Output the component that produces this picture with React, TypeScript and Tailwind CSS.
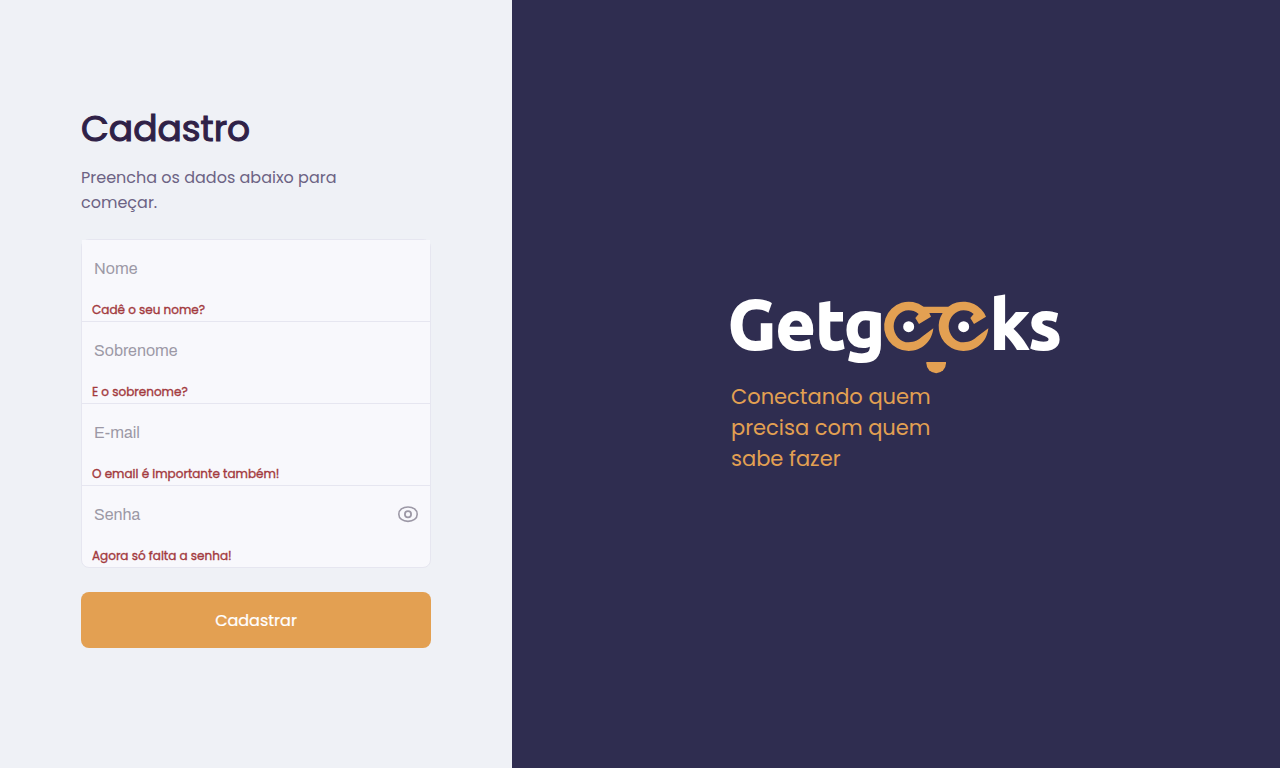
import { useState } from "react";

const fields = [
  { id: "nome", label: "Nome", type: "text", error: "Cadê o seu nome?" },
  { id: "sobrenome", label: "Sobrenome", type: "text", error: "E o sobrenome?" },
  { id: "email", label: "E-mail", type: "email", error: "O email é importante também!" },
  { id: "senha", label: "Senha", type: "password", error: "Agora só falta a senha!" },
];

function EyeIcon() {
  return (
    <svg viewBox="0 0 24 24" className="size-6" fill="none" stroke="currentColor" aria-hidden="true">
      <path
        d="M2.8 11.2C2.8 6.8 6.9 4 12 4S21.2 6.8 21.2 11.2 17.1 18.4 12 18.4 2.8 15.6 2.8 11.2Z"
        strokeWidth="1.6"
      />
      <circle cx="12" cy="11.2" r="3.1" strokeWidth="1.8" />
    </svg>
  );
}

function Logo() {
  return (
    <svg viewBox="0 0 330 80" className="block h-20 w-full overflow-visible" role="img" aria-label="Getgeeks">
      <g fill="#fff" stroke="#fff" strokeWidth="2" fontFamily="Ubuntu, Roboto, sans-serif" fontWeight="700" fontSize="69">
        <text x="-3" y="55">Getg</text>
        <text x="259" y="55">ks</text>
      </g>
      <g transform="translate(139 -9) scale(.33333)" fill="#e3a052">
        <path d="M190 130C186 170 155 198 116 198A74 74 0 1 1 161 65H236V84H178L183 95L147 117L136 99L146 87C137 79 126 76 116 76A45 48 0 0 0 116 172C134 172 148 163 158 154Z" />
        <path d="M355 130C351 170 320 198 281 198A74 74 0 1 1 348 95L312 117L301 99L311 87C302 79 291 76 281 76A45 48 0 0 0 281 172C299 172 313 163 323 154Z" />
        <path d="M169 231H228V235A29.5 29.5 0 0 1 169 235Z" />
        <circle cx="116" cy="125" r="16.5" fill="#fff" />
        <circle cx="281" cy="125" r="16.5" fill="#fff" />
      </g>
    </svg>
  );
}

export default function App() {
  const [visible, setVisible] = useState(false);
  return (
    <div className="flex min-h-screen bg-[#eff1f6] font-[Poppins,Inter,sans-serif]">
      <main className="flex w-2/5 flex-col items-center justify-center pb-2.5">
        <div className="w-full max-w-[350px]">
          <h1 className="mb-[18px] text-4xl leading-9 font-normal text-[#2f2147] [-webkit-text-stroke:0.03em_currentColor]">
            Cadastro
          </h1>
          <p className="mb-6 max-w-[290px] text-base leading-[25px] text-[#6c6384]">
            Preencha os dados abaixo para começar.
          </p>
          <form noValidate onSubmit={(e) => e.preventDefault()}>
            <div className="mb-6 divide-y divide-[#e6e6f0] rounded-lg border border-[#e6e6f0] bg-[#f8f8fc]">
              {fields.map((f) => (
                <div key={f.id} className="flex flex-col">
                  <div className="flex h-[58px] items-center bg-[#f8f8fc] pr-[10px]">
                    <input
                      id={f.id}
                      type={f.id === "senha" && visible ? "text" : f.type}
                      placeholder={f.label}
                      aria-label={f.label}
                      aria-describedby={`${f.id}-erro`}
                      className="h-full min-w-0 flex-1 bg-transparent px-3 font-[Archivo,'Liberation_Sans',sans-serif] text-base text-[#2f2147] outline-none placeholder:text-[#9c98a6]"
                    />
                    {f.id === "senha" && (
                      <button
                        type="button"
                        aria-label="Mostrar senha"
                        onClick={() => setVisible(!visible)}
                        className="text-[#9c98a6]"
                      >
                        <EyeIcon />
                      </button>
                    )}
                  </div>
                  <span
                    id={`${f.id}-erro`}
                    className="h-[23px] pl-[10px] text-xs leading-6 font-normal text-[#a33a3e] [-webkit-text-stroke:0.03em_currentColor]"
                  >
                    {f.error}
                  </span>
                </div>
              ))}
            </div>
            <button
              type="submit"
              className="h-14 w-full rounded-lg bg-[#e3a052] pt-0.5 text-base font-normal text-white [-webkit-text-stroke:0.015em_currentColor]"
            >
              Cadastrar
            </button>
          </form>
        </div>
      </main>
      <aside className="flex flex-1 flex-col items-center justify-center bg-[#2f2d50]">
        <div className="w-full max-w-[330px]">
          <Logo />
          <p className="mt-[7px] max-w-[230px] text-[21px] leading-[31px] text-[#e3a052]">
            Conectando quem precisa com quem sabe fazer
          </p>
        </div>
      </aside>
    </div>
  );
}
